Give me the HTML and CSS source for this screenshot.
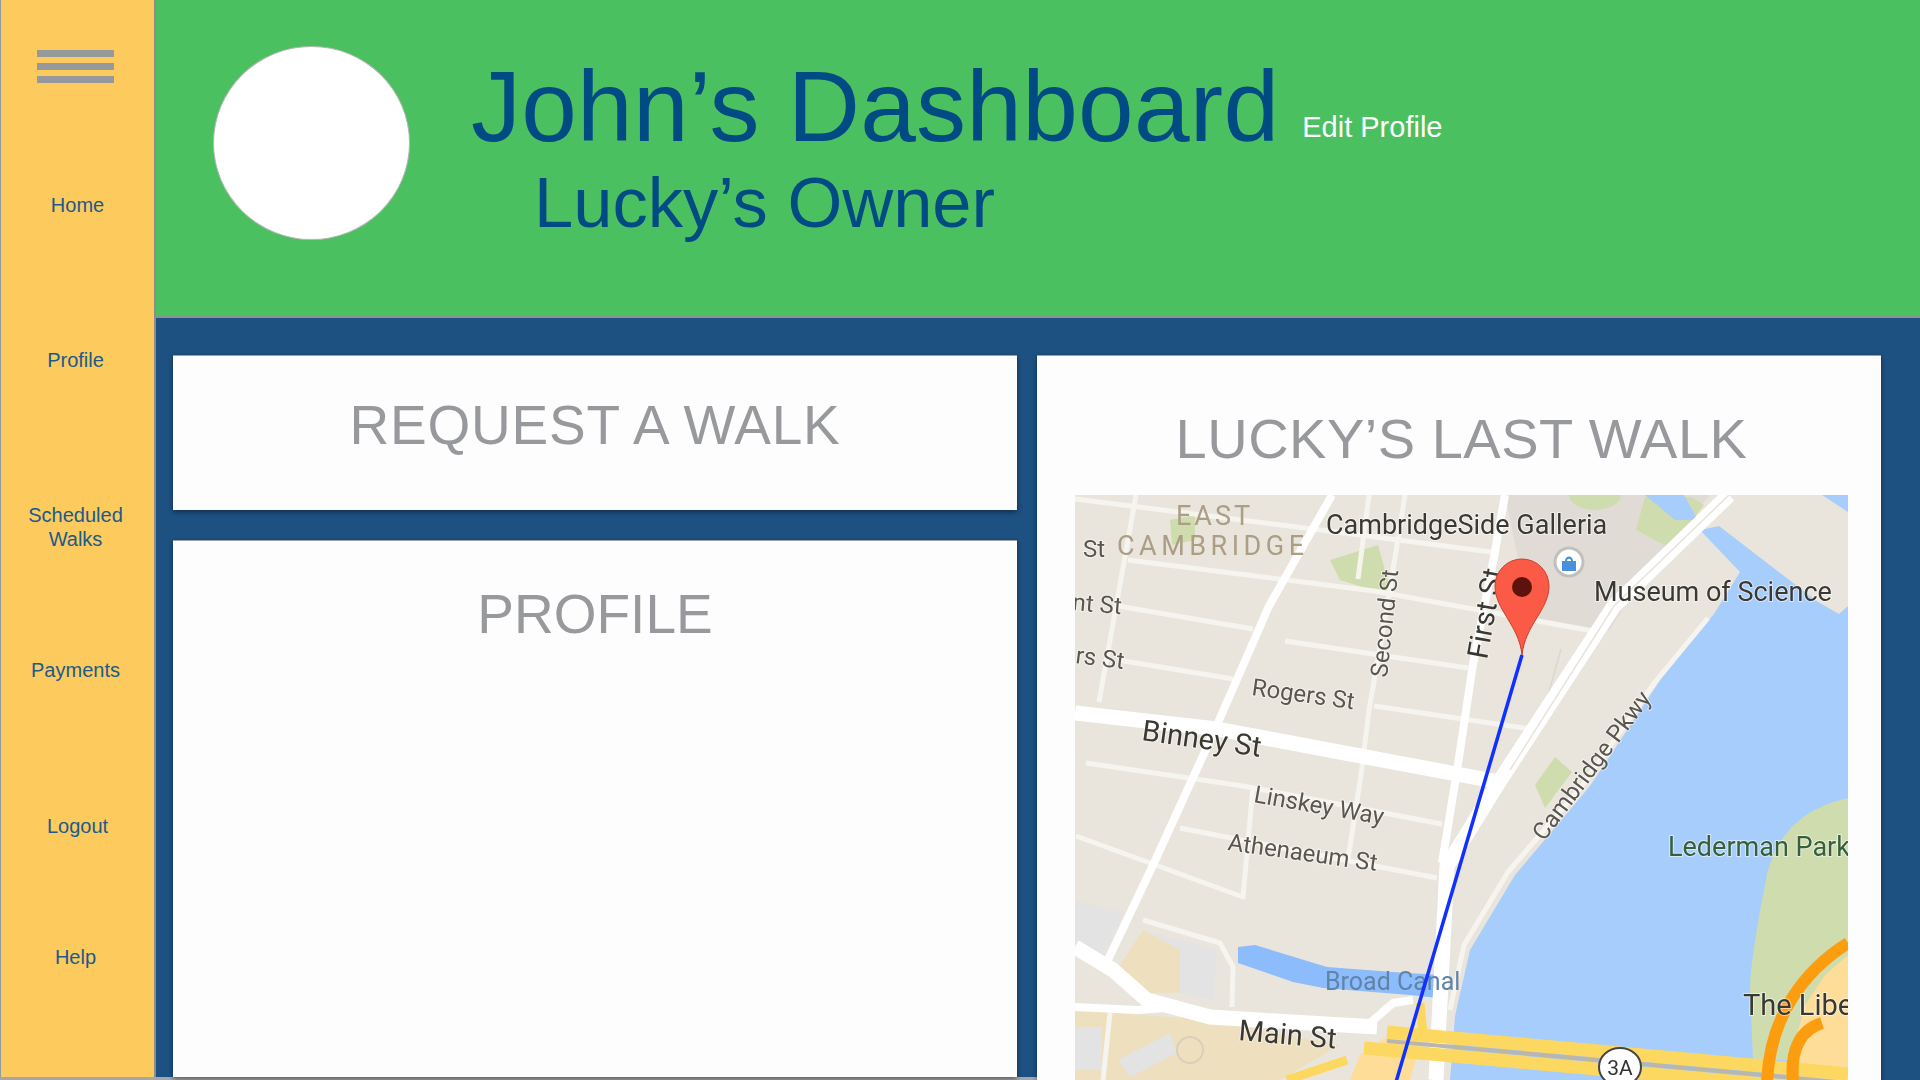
FILE: index.html
```html
<!DOCTYPE html>
<html>
<head>
	<meta charset="utf-8">
	<title>John's Dashboard</title>
	<link rel="stylesheet" href="styles.css">
</head>
<body>
	<div class="app">
		<div class="sidebar">
			<div class="burger"><span></span><span></span><span></span></div>
			<div class="nav">
				<div class="nav-item nudge">Home</div>
				<div class="nav-item">Profile</div>
				<div class="nav-item">Scheduled<br>Walks</div>
				<div class="nav-item tall">Payments</div>
				<div class="nav-item nudge short">Logout</div>
				<div class="nav-item">Help</div>
			</div>
		</div>

		<div class="main">
			<div class="header">
				<div class="avatar"></div>
				<div class="titles">
					<div class="title-row">
						<h1>John’s Dashboard</h1>
						<div class="edit">Edit Profile</div>
					</div>
					<h2>Lucky’s Owner</h2>
				</div>
			</div>

			<div class="content">
				<div class="col-left">
					<div class="card card-request">
						<h3>REQUEST A WALK</h3>
					</div>
					<div class="card card-profile">
						<h3>PROFILE</h3>
					</div>
				</div>
				<div class="col-right">
					<div class="card card-walk">
						<h3>LUCKY’S LAST WALK</h3>
						<div class="map">
							<svg class="map-svg" width="773" height="585" viewBox="1075 495 773 585">
								<rect class="land" x="1075" y="495" width="773" height="585"/>

								<!-- areas -->
								<polygon class="bldg" points="1505,495 1710,495 1656,557 1609,631 1531,622"/>
								<ellipse class="park" cx="1595" cy="495" rx="26" ry="15"/>
								<polygon class="park" points="1645,497 1692,497 1704,505 1670,548 1636,530"/>
								<polygon class="park" points="1330,560 1378,545 1392,595 1372,590 1340,580"/>
								<polygon class="park" points="1170,520 1195,515 1195,540 1172,545"/>
								<polygon class="park" points="1535,785 1555,757 1572,772 1545,808"/>
								<polygon class="water" points="1645,495 1684,495 1698,520 1675,520"/>
								<polygon class="water" points="1822,495 1848,495 1848,512"/>
								<polygon class="water" points="1719,526 1818,602 1839,614 1848,606 1848,1080 1450,1080 1455,1016 1470,950 1515,875 1590,786 1661,679 1714,614 1740,572 1700,530"/>
								<path class="park" d="M1848 798C1805 808 1780 830 1768 870C1762 900 1750 960 1750 990L1753 1060H1848Z"/>
								<polygon class="tan" points="1075,1010 1210,1020 1340,1045 1280,1080 1075,1080"/>
								<polygon class="tan" points="1117,970 1143,930 1180,943 1180,993 1147,993"/>
								<polygon class="grey" points="1143,930 1217,950 1213,1000 1180,993 1180,950"/>
								<polygon class="grey" points="1075,900 1123,913 1103,957 1075,940"/>
								<rect class="grey" x="1075" y="1027" width="27" height="43"/>
								<polygon class="grey" points="1118,1060 1170,1033 1177,1053 1130,1077"/>
								<circle class="ring" cx="1190" cy="1050" r="13"/>
								<polygon class="canal" points="1238,947 1255,945 1327,967 1393,972 1440,975 1437,998 1410,995 1323,988 1293,982 1238,963"/>
								<polygon class="tan2" points="1848,955 1825,975 1805,1005 1785,1080 1848,1080"/>
								<polygon class="tan2" points="1360,1055 1390,1035 1420,1045 1410,1080 1350,1080"/>

								<!-- small streets -->
								<polyline class="st" points="1075,499 1321,530 1499,553"/>
								<polyline class="st" points="1128,560 1374,591 1604,633"/>
								<polyline class="st" points="1118,606 1253,629"/>
								<polyline class="st" points="1285,641 1468,668"/>
								<polyline class="st" points="1118,660 1233,679"/>
								<polyline class="st" points="1374,706 1531,729"/>
								<polyline class="st" points="1086,763 1243,786 1442,824"/>
								<polyline class="st" points="1253,786 1243,897 1076,836"/>
								<polyline class="st" points="1180,828 1437,878"/>
								<polyline class="st" points="1136,495 1099,702"/>
								<polyline class="st" points="1369,495 1358,579"/>
								<polyline class="st" points="1405,495 1389,595 1369,710 1361,775 1348,859"/>
								<polyline class="st" points="1143,920 1220,943 1233,967 1232,1007"/>
								<polyline class="st" points="1110,1013 1103,1080"/>
								<polyline class="st thin" points="1561,649 1537,735"/>
								<polyline class="st" points="1708,618 1655,682 1582,786 1508,872 1464,945 1450,1010"/>

								<!-- big roads -->
								<polyline class="road" points="1505,495 1494,557 1473,664 1457,771 1442,863"/>
								<polyline class="road" points="1332,495 1269,606 1217,725 1154,863 1107,962"/>
								<polyline class="road wide" points="1075,713 1217,729 1499,782"/>
								<polyline class="road wide" points="1729,495 1614,606 1499,782 1447,866 1436,1080"/>
								<polyline class="road-mid" points="1729,495 1614,606 1510,770"/>
								<polyline class="road wide" points="1075,947 1113,970 1147,1000 1210,1017 1377,1027"/>
								<polyline class="road" points="1075,1007 1137,1010 1165,1008"/>
								<polyline class="road" points="1370,1023 1393,1003 1413,1000"/>

								<!-- highway -->
								<polyline class="hw" points="1287,1080 1347,1060"/>
								<polyline class="hw" points="1420,1003 1423,1033"/>
								<polyline class="hw band" points="1387,1032 1763,1066 1848,1074"/>
								<polyline class="hw band" points="1364,1048 1763,1084 1848,1092"/>
								<polyline class="hw-mid" points="1387,1041 1763,1075 1848,1083"/>
								<path class="ramp" d="M1848 943C1805 970 1770 1015 1767 1082"/>
								<path class="ramp" d="M1822 1023C1800 1030 1790 1050 1793 1082"/>

								<!-- labels -->
								<text class="lbl area" x="1176" y="525">EAST</text>
								<text class="lbl area wide-lbl" x="1117" y="555">CAMBRIDGE</text>
								<text class="lbl" x="1083" y="557">St</text>
								<text class="lbl dark" x="1326" y="534">CambridgeSide Galleria</text>
								<text class="lbl dark" x="1594" y="601">Museum of Science</text>
								<text class="lbl" transform="translate(1072 610) rotate(5)">nt St</text>
								<text class="lbl" transform="translate(1075 663) rotate(7)">rs St</text>
								<text class="lbl" transform="translate(1387 678) rotate(-84)">Second St</text>
								<text class="lbl dark big" transform="translate(1487 660) rotate(-80)">First St</text>
								<text class="lbl" transform="translate(1251 695) rotate(8)">Rogers St</text>
								<text class="lbl dark big" transform="translate(1141 740) rotate(8)">Binney St</text>
								<text class="lbl" transform="translate(1253 802) rotate(10)">Linskey Way</text>
								<text class="lbl" transform="translate(1227 850) rotate(8)">Athenaeum St</text>
								<text class="lbl" transform="translate(1544 842) rotate(-53)">Cambridge Pkwy</text>
								<text class="lbl park-lbl" x="1668" y="856">Lederman Park</text>
								<text class="lbl canal-lbl" x="1325" y="990">Broad Canal</text>
								<text class="lbl dark big" transform="translate(1238 1040) rotate(5)">Main St</text>
								<text class="lbl dark big" x="1743" y="1015">The Libe</text>
								<ellipse class="shield" cx="1620" cy="1067" rx="21" ry="19"/>
								<text class="shield-txt" x="1620" y="1075">3A</text>

								<!-- museum icon -->
								<circle class="poi" cx="1569" cy="562" r="14"/>
								<path class="poi-bag" d="M1562 561h14v10h-14zM1565 561c0-6 8-6 8 0h-2c0-3-4-3-4 0z"/>

								<!-- route and pin -->
								<line class="route" x1="1522" y1="655" x2="1396" y2="1082"/>
								<path class="pin" d="M1522 655C1519 625 1495 610 1495 586A27 27 0 1 1 1549 586C1549 610 1525 625 1522 655Z"/>
								<circle class="pin-dot" cx="1522" cy="587" r="10"/>
							</svg>
						</div>
					</div>
				</div>
			</div>
		</div>
	</div>
</body>
</html>
```

FILE: styles.css
```css
html, body {
	margin: 0;
	height: 1080px;
	overflow: hidden;
	background: #a6a6a6;
}
body {
	font-family: "Liberation Sans", Arial, sans-serif;
}
h1, h2, h3 {
	margin: 0;
	font-weight: normal;
}
.app {
	display: flex;
	height: 1080px;
}

/* left menu */
.sidebar {
	box-sizing: border-box;
	width: 156px;
	height: 1077px;
	padding-top: 50px;
	background: #fdca5d;
	border-left: 1px solid #8f9aa3;
	border-right: 2px solid #8d8d86;
}
.burger {
	display: flex;
	flex-direction: column;
	gap: 6px;
	width: 77px;
	margin-left: 36px;
}
.burger span {
	height: 7px;
	background: #96999b;
}
.nav {
	margin-top: 110px;
	padding-right: 4px;
}
.nav-item {
	height: 155px;
	line-height: 24px;
	font-size: 20px;
	text-align: center;
	color: #1b5a8c;
}
.nudge {
	padding-left: 4px;
}
.tall {
	height: 156px;
}
.short {
	height: 131px;
}

.main {
	flex: 1;
	display: flex;
	flex-direction: column;
}

/* green banner */
.header {
	display: flex;
	box-sizing: border-box;
	height: 318px;
	padding: 46px 0 0 57px;
	background: #4bc060;
	border-bottom: 2px solid #8c938f;
}
.avatar {
	box-sizing: border-box;
	width: 197px;
	height: 194px;
	border-radius: 50%;
	background: #fff;
	border: 1px solid #b5b5b5;
}
.titles {
	margin: 10px 0 0 61px;
}
.title-row {
	display: flex;
}
h1 {
	font-size: 100px;
	line-height: 100px;
	letter-spacing: .25px;
	color: #004b84;
}
.edit {
	margin: 53px 0 0 23px;
	font-size: 29px;
	line-height: 36px;
	color: #fff;
}
h2 {
	margin: 12px 0 0 63px;
	font-size: 70.5px;
	line-height: 70px;
	color: #004b84;
}

/* blue area with the cards */
.content {
	flex: 1;
	display: flex;
}
.col-left {
	box-sizing: border-box;
	display: flex;
	flex-direction: column;
	gap: 30px;
	width: 881px;
	height: 759px;
	padding: 37px 20px 0 17px;
	background: #1d5182;
}
.col-right {
	flex: 1;
	box-sizing: border-box;
	height: 762px;
	padding: 37px 39px 0 0;
	background: #1d5182;
}
.card {
	box-sizing: border-box;
	background: #fdfdfd;
	border-top: 1px solid #9aa0a6;
	box-shadow: 0 2px 5px rgba(0, 0, 0, .45);
}
.card h3 {
	font-size: 55px;
	line-height: 60px;
	text-align: center;
	color: #97999c;
}
.card-request {
	height: 155px;
	padding-top: 39px;
}
.card-request h3 {
	letter-spacing: .8px;
}
.card-profile {
	flex: 1;
	padding-top: 43px;
}
.card-walk {
	height: 725px;
	padding: 53px 33px 0 38px;
	overflow: hidden;
}
.card-walk h3 {
	font-size: 56px;
	letter-spacing: .5px;
}

/* map */
.map {
	height: 585px;
	margin-top: 26px;
	overflow: hidden;
}
.map-svg {
	display: block;
	filter: blur(.7px);
}
.map-svg polyline, .map-svg path.ramp {
	fill: none;
	stroke-linejoin: round;
}
.land { fill: #e9e5dc; }
.bldg { fill: #e0dcd5; }
.park { fill: #cfdcae; }
.water { fill: #a6cdfc; }
.canal { fill: #8dbcfc; }
.tan { fill: #eedfbf; }
.tan2 { fill: #fedd99; }
.grey { fill: #e3e3e3; }
.ring {
	fill: none;
	stroke: #d9cfba;
	stroke-width: 2;
}
.st {
	stroke: #f6f4ee;
	stroke-width: 5;
}
.st.thin {
	stroke: #dcd8cf;
	stroke-width: 1.5;
}
.road {
	stroke: #fff;
	stroke-width: 8;
}
.road.wide {
	stroke-width: 15;
}
.road-mid {
	stroke: #e6e3da;
	stroke-width: 1.5;
}
.hw {
	stroke: #fdd860;
	stroke-width: 9;
}
.hw.band {
	stroke-width: 13;
}
.hw-mid {
	stroke: #b9b6ac;
	stroke-width: 4;
}
.ramp {
	stroke: #fb9d0e;
	stroke-width: 12;
}
.lbl {
	font-family: Roboto, sans-serif;
	font-size: 24px;
	fill: #5a564e;
	stroke: rgba(255, 255, 255, .55);
	stroke-width: 2px;
	paint-order: stroke;
}
.lbl.dark {
	font-size: 27px;
	fill: #3a3832;
}
.lbl.big {
	font-size: 29px;
}
.lbl.area {
	font-size: 27px;
	letter-spacing: 3px;
	fill: #ab9e85;
	stroke: none;
}
.lbl.wide-lbl {
	letter-spacing: 4.5px;
}
.park-lbl {
	font-size: 27px;
	fill: #35603a;
}
.canal-lbl {
	font-size: 25px;
	fill: #5f84a8;
	stroke: none;
}
.shield {
	fill: #fff;
	stroke: #444;
	stroke-width: 2;
}
.shield-txt {
	font-family: Roboto, sans-serif;
	font-size: 21px;
	text-anchor: middle;
	fill: #333;
}
.poi {
	fill: #fff;
	stroke: #c2c0bb;
	stroke-width: 3;
}
.poi-bag { fill: #4a8fd9; }
.route {
	stroke: #1030ff;
	stroke-width: 3.5;
}
.pin {
	fill: #fb5a47;
	stroke: #c8402f;
	stroke-width: 1;
}
.pin-dot { fill: #5b130b; }
```
